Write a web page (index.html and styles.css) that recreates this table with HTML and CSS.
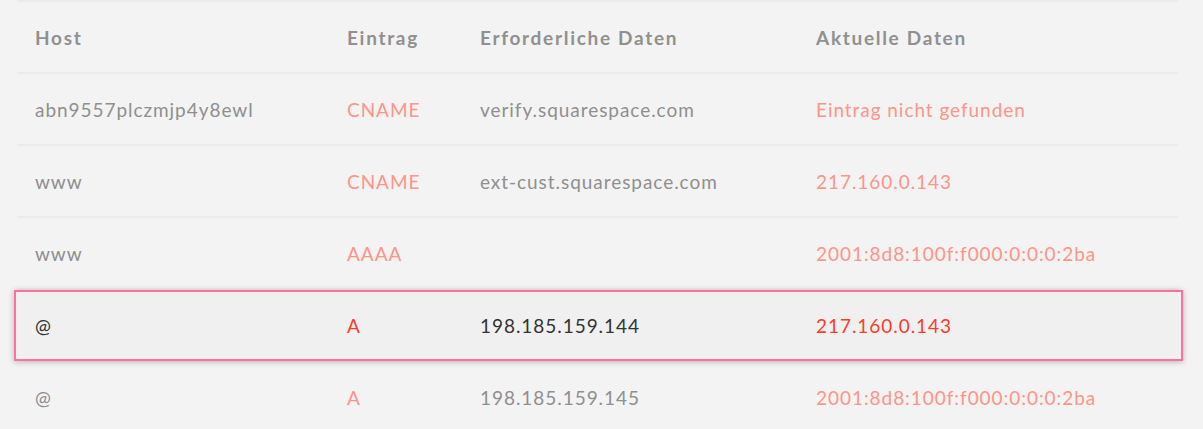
FILE: index.html
```html
<!DOCTYPE html>
<html lang="de">
<head>
<meta charset="utf-8">
<title>DNS-Einträge</title>
<link rel="stylesheet" href="styles.css">
</head>
<body>
<div class="page">
  <div class="table">
    <div class="row head">
      <div>Host</div><div>Eintrag</div><div>Erforderliche Daten</div><div>Aktuelle Daten</div>
    </div>
    <div class="row">
      <div>abn9557plczmjp4y8ewl</div><div class="warn">CNAME</div><div>verify.squarespace.com</div><div class="warn">Eintrag nicht gefunden</div>
    </div>
    <div class="row">
      <div>www</div><div class="warn">CNAME</div><div>ext-cust.squarespace.com</div><div class="warn">217.160.0.143</div>
    </div>
    <div class="row">
      <div>www</div><div class="warn">AAAA</div><div></div><div class="warn">2001:8d8:100f:f000:0:0:0:2ba</div>
    </div>
    <div class="row active">
      <div>@</div><div class="warn">A</div><div>198.185.159.144</div><div class="warn">217.160.0.143</div>
    </div>
    <div class="row last">
      <div>@</div><div class="warn">A</div><div>198.185.159.145</div><div class="warn">2001:8d8:100f:f000:0:0:0:2ba</div>
    </div>
  </div>
</div>
</body>
</html>
```
FILE: styles.css
```css
* { box-sizing: border-box; }
html, body { margin: 0; padding: 0; }
body {
  background: #f3f3f3;
  font-family: Lato, "Liberation Sans", sans-serif;
  font-size: 19px;
  color: #8f8f8f;
  height: 429px;
  overflow: hidden;
}
.page { padding: 0 25px 0 17px; }
.table { border-top: 2px solid #ebebeb; }
.row {
  display: grid;
  grid-template-columns: 312px 133px 336px 1fr;
  align-items: center;
  height: 72px;
  padding-left: 18px;
  border-bottom: 2px solid #ebebeb;
  letter-spacing: 0.95px;
}
.row.head {
  font-weight: 700;
  color: #909090;
  letter-spacing: 1.7px;
}
.warn { color: #ff9488; }
.row.active {
  margin: 0 -5px 0 -3px;
  padding-left: 19px;
  height: 71px;
  border: 2px solid #ff719c;
  background: #f0f0f0;
  box-shadow: 0 1px 6px rgba(0, 0, 0, 0.25);
  color: #333333;
  position: relative;
}
.row.active .warn { color: #ff3b2a; }
.row.last { border-bottom: none; }
```
